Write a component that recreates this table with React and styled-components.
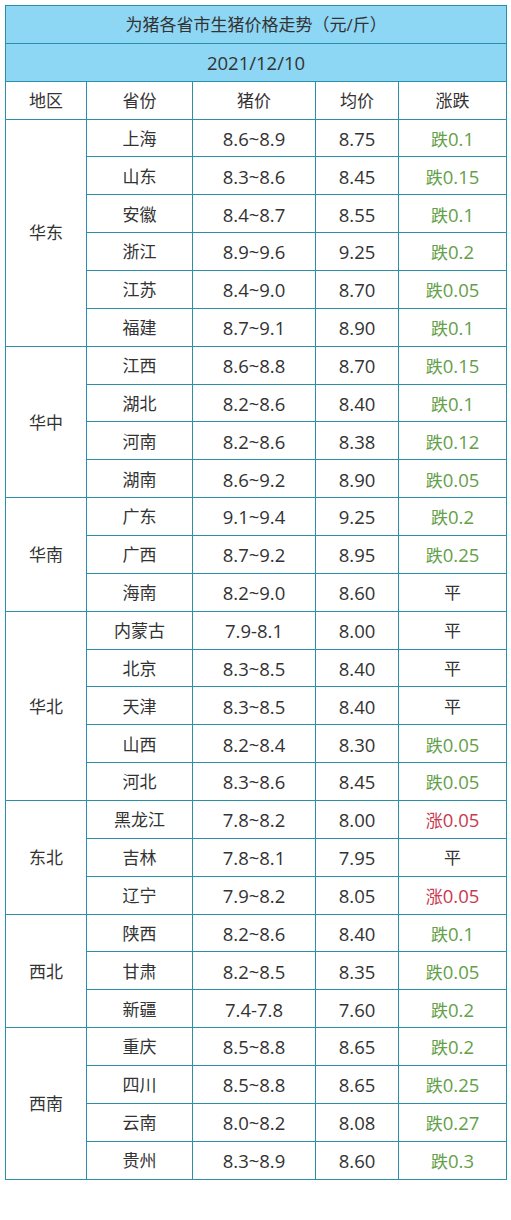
import React from 'react';
import styled, { createGlobalStyle } from 'styled-components';

const GlobalStyle = createGlobalStyle`
  body {
    margin: 0;
    background: #ffffff;
    font-family: "Open Sans", "Noto Sans CJK SC", sans-serif;
  }
`

const Page = styled.div`
  padding: 5px 5px 40px 5px;
`

const Table = styled.table`
  width: 501px;
  border-collapse: collapse;
  table-layout: fixed;
  color: #333333;
  font-size: 17px;
`

const Row = styled.tr`
  height: 37.87px;
`

const Cell = styled.td`
  border: 1.5px solid #2a8fab;
  text-align: center;
  vertical-align: middle;
  padding: 2px 0 0 0;
  line-height: 1.2;
  background: ${p => (p.$head ? '#8dd6f4' : '#ffffff')};
  color: ${p => (p.$tone === 'down' ? '#64a048' : p.$tone === 'up' ? '#c8394f' : '#333333')};
`

const Num = styled.span`
  font-size: 18.5px;
`

const data = [
  ['华东', [
    ['上海', '8.6~8.9', '8.75', '跌0.1'],
    ['山东', '8.3~8.6', '8.45', '跌0.15'],
    ['安徽', '8.4~8.7', '8.55', '跌0.1'],
    ['浙江', '8.9~9.6', '9.25', '跌0.2'],
    ['江苏', '8.4~9.0', '8.70', '跌0.05'],
    ['福建', '8.7~9.1', '8.90', '跌0.1'],
  ]],
  ['华中', [
    ['江西', '8.6~8.8', '8.70', '跌0.15'],
    ['湖北', '8.2~8.6', '8.40', '跌0.1'],
    ['河南', '8.2~8.6', '8.38', '跌0.12'],
    ['湖南', '8.6~9.2', '8.90', '跌0.05'],
  ]],
  ['华南', [
    ['广东', '9.1~9.4', '9.25', '跌0.2'],
    ['广西', '8.7~9.2', '8.95', '跌0.25'],
    ['海南', '8.2~9.0', '8.60', '平'],
  ]],
  ['华北', [
    ['内蒙古', '7.9-8.1', '8.00', '平'],
    ['北京', '8.3~8.5', '8.40', '平'],
    ['天津', '8.3~8.5', '8.40', '平'],
    ['山西', '8.2~8.4', '8.30', '跌0.05'],
    ['河北', '8.3~8.6', '8.45', '跌0.05'],
  ]],
  ['东北', [
    ['黑龙江', '7.8~8.2', '8.00', '涨0.05'],
    ['吉林', '7.8~8.1', '7.95', '平'],
    ['辽宁', '7.9~8.2', '8.05', '涨0.05'],
  ]],
  ['西北', [
    ['陕西', '8.2~8.6', '8.40', '跌0.1'],
    ['甘肃', '8.2~8.5', '8.35', '跌0.05'],
    ['新疆', '7.4-7.8', '7.60', '跌0.2'],
  ]],
  ['西南', [
    ['重庆', '8.5~8.8', '8.65', '跌0.2'],
    ['四川', '8.5~8.8', '8.65', '跌0.25'],
    ['云南', '8.0~8.2', '8.08', '跌0.27'],
    ['贵州', '8.3~8.9', '8.60', '跌0.3'],
  ]],
];

function toneOf(change) {
  if (change.startsWith('跌')) return 'down';
  if (change.startsWith('涨')) return 'up';
  return null;
}

// "跌0.15" -> 跌 + larger number part
function Change({ value }) {
  if (value.length === 1) return value;
  return (
    <>
      {value[0]}
      <Num>{value.slice(1)}</Num>
    </>
  );
}

export default function App() {
  return (
    <Page>
      <GlobalStyle />
      <Table>
        <colgroup>
          <col style={{ width: 81 }} />
          <col style={{ width: 106 }} />
          <col style={{ width: 123 }} />
          <col style={{ width: 83 }} />
          <col style={{ width: 108 }} />
        </colgroup>
        <tbody>
          <Row>
            <Cell $head colSpan={5}>为猪各省市生猪价格走势（元/斤）</Cell>
          </Row>
          <Row>
            <Cell $head colSpan={5}><Num>2021/12/10</Num></Cell>
          </Row>
          <Row>
            <Cell>地区</Cell>
            <Cell>省份</Cell>
            <Cell>猪价</Cell>
            <Cell>均价</Cell>
            <Cell>涨跌</Cell>
          </Row>
          {data.map(([region, rows]) =>
            rows.map((r, i) => (
              <Row key={region + r[0]}>
                {i === 0 && <Cell rowSpan={rows.length}>{region}</Cell>}
                <Cell>{r[0]}</Cell>
                <Cell><Num>{r[1]}</Num></Cell>
                <Cell><Num>{r[2]}</Num></Cell>
                <Cell $tone={toneOf(r[3])}><Change value={r[3]} /></Cell>
              </Row>
            ))
          )}
        </tbody>
      </Table>
    </Page>
  );
}
